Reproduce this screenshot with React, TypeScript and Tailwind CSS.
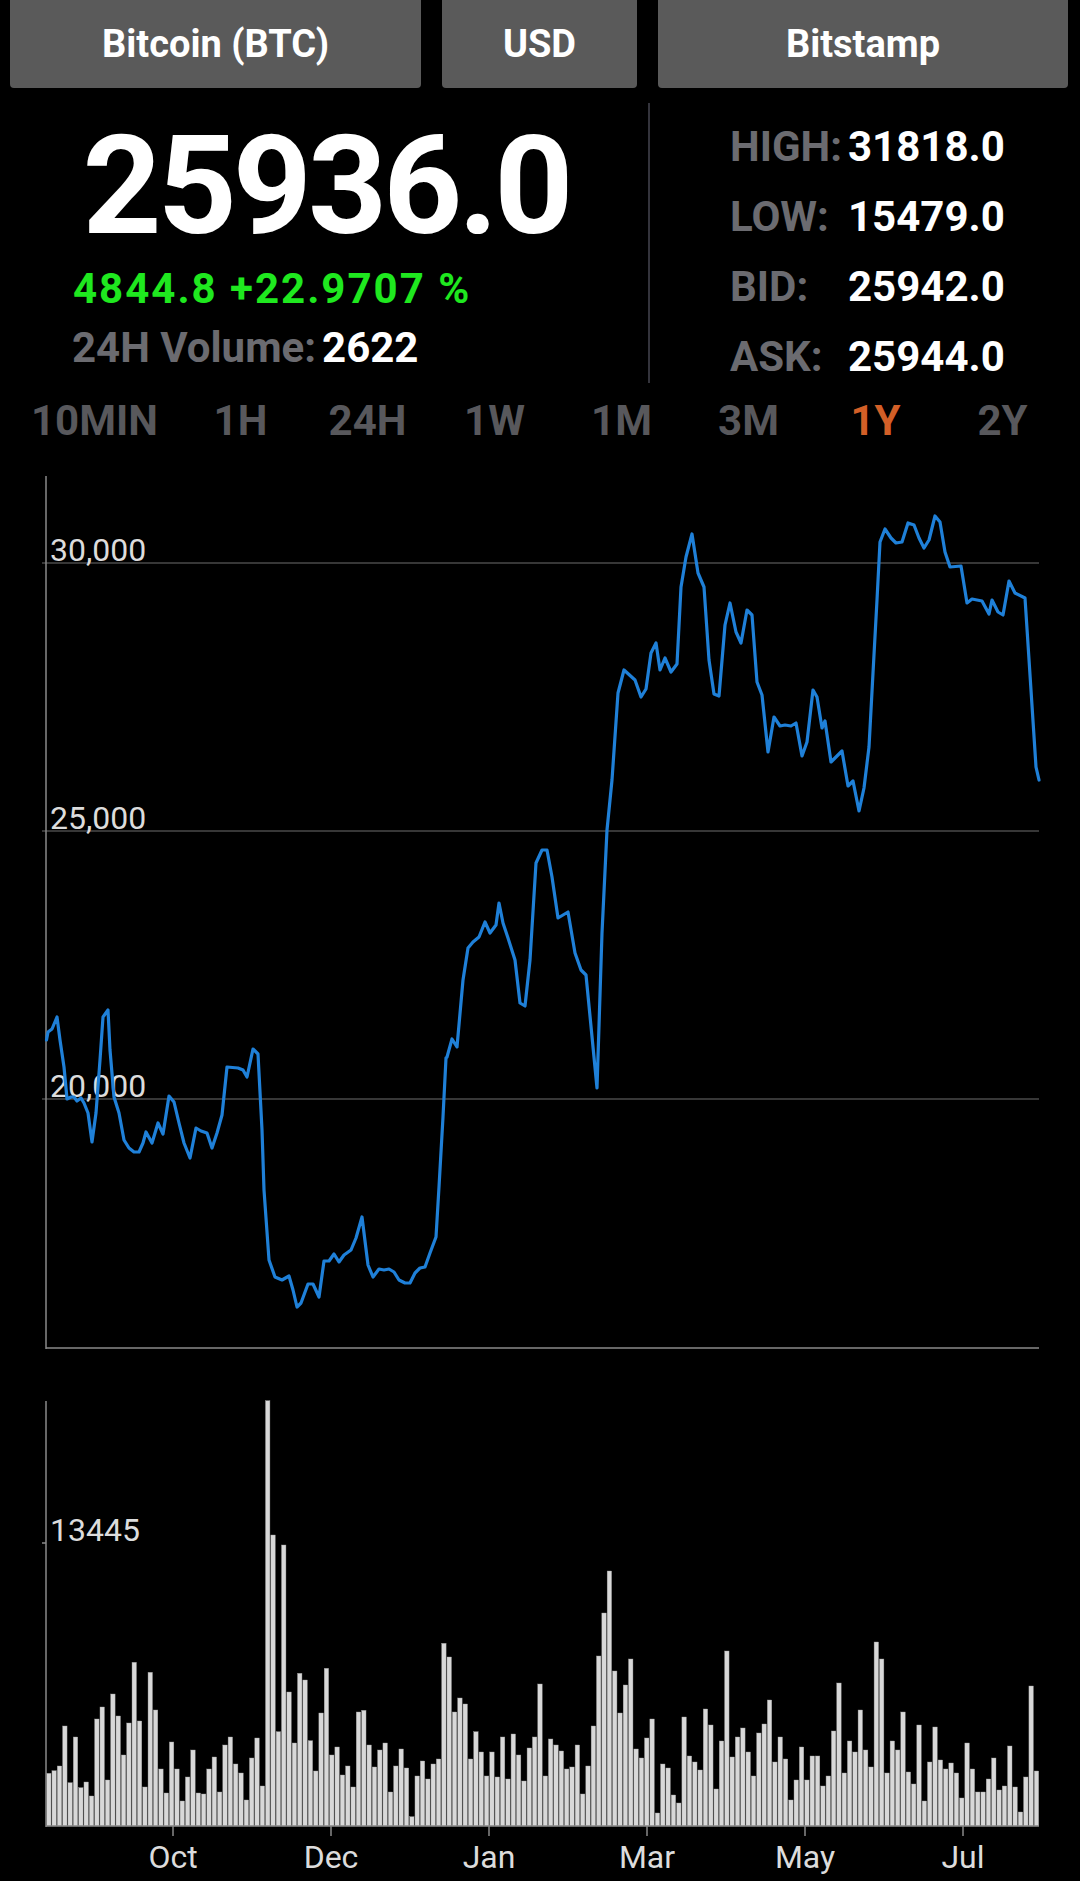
const TIMEFRAMES = ["1H", "24H", "1W", "1M", "3M", "1Y", "2Y"];

const STATS = [
  { label: "HIGH:", value: "31818.0" },
  { label: "LOW:", value: "15479.0" },
  { label: "BID:", value: "25942.0" },
  { label: "ASK:", value: "25944.0" },
];

// price line, in page coordinates
const PRICE = [
  46.5, 1040, 48, 1032, 52, 1029, 57, 1017, 60, 1040, 64, 1067, 67, 1099, 71, 1097, 74, 1097, 77, 1101,
  81, 1098, 84, 1103, 88, 1113, 92, 1142, 96, 1113, 100, 1060, 103, 1017, 108, 1010, 110, 1050, 114, 1097,
  119, 1113, 124, 1140, 129, 1148, 134, 1152, 139, 1152, 143, 1143, 146, 1132, 152, 1143, 158, 1123, 163, 1134,
  169, 1096, 174, 1102, 179, 1123, 184, 1143, 190, 1158, 196, 1128, 201, 1131, 207, 1133, 212, 1148, 217, 1133,
  222, 1115, 227, 1067, 238, 1068, 243, 1070, 247, 1077, 253, 1049, 258, 1054, 262, 1130, 264, 1190, 269, 1260,
  275, 1277, 282, 1280, 289, 1276, 293, 1290, 297, 1307, 301, 1303, 308, 1284, 313, 1284, 319, 1297, 324, 1261,
  329, 1261, 334, 1254, 339, 1262, 344, 1255, 351, 1250, 356, 1238, 362, 1217, 368, 1265, 373, 1277, 379, 1269,
  384, 1270, 389, 1269, 394, 1272, 399, 1280, 405, 1283, 410, 1283, 415, 1273, 420, 1268, 425, 1267, 430, 1253,
  436, 1237, 439, 1187, 443, 1117, 446, 1058, 447, 1057, 452, 1039, 457, 1047, 463, 980, 468, 948, 473, 942,
  479, 937, 485, 922, 490, 933, 496, 925, 499, 903, 503, 923, 508, 938, 515, 960, 520, 1003, 525, 1006,
  530, 960, 536, 863, 542, 850, 547, 850, 552, 877, 558, 918, 568, 912, 575, 953, 581, 970, 586, 975,
  597, 1088, 602, 933, 607, 830, 612, 780, 618, 693, 624, 670, 635, 680, 641, 697, 646, 689, 651, 653,
  656, 643, 660, 670, 665, 658, 671, 672, 677, 664, 681, 587, 686, 557, 692, 534, 698, 573, 704, 587,
  709, 660, 714, 694, 719, 696, 725, 625, 730, 603, 736, 632, 741, 643, 747, 610, 752, 615, 757, 682,
  762, 695, 768, 752, 774, 717, 780, 726, 785, 725, 791, 726, 796, 723, 802, 756, 807, 742, 813, 690,
  817, 697, 822, 728, 825, 721, 831, 762, 836, 757, 842, 751, 848, 786, 853, 781, 859, 811, 864, 788,
  869, 747, 873, 673, 877, 600, 880, 542, 885, 529, 891, 538, 896, 543, 902, 542, 908, 523, 914, 525,
  919, 538, 924, 548, 929, 540, 935, 516, 940, 522, 945, 552, 950, 567, 961, 566, 967, 603, 972, 599,
  982, 601, 989, 614, 992, 600, 998, 612, 1003, 615, 1009, 581, 1015, 593, 1025, 598, 1036, 767, 1039, 780,
];

const VOLUME = [
  52.7, 55.3, 60, 100, 43.3, 89, 38.3, 44, 30, 107, 119, 46, 132, 110, 71, 103, 163.7, 105, 39, 153.7,
  116, 57, 33, 84, 57, 25, 49, 76, 33, 32, 57, 69, 34, 81, 89, 62, 53, 26, 68, 88,
  40, 425.3, 291, 94.3, 281, 134, 83, 152.7, 146, 85.3, 55, 113, 157.7, 71, 79, 51, 60, 39, 114, 115.7,
  81, 59, 76, 83, 34, 60, 77, 58, 9.3, 50, 65, 47, 62, 67, 182.7, 169, 114, 128, 122, 67,
  94.3, 74, 50, 74, 49, 89, 47, 92, 71, 45, 78, 89, 142,
  50, 87, 81, 75, 57, 59, 81, 32, 60, 100, 170, 213, 255, 155, 113, 141, 167, 77, 68, 88,
  107, 13, 62, 58, 31, 23, 109, 70, 64, 56, 117, 101, 37, 85, 175, 69, 89, 98, 74, 50,
  93, 102, 126, 64, 89, 67, 26, 46, 79, 46, 70, 70, 40, 50, 95, 143, 53, 85, 74, 116,
  76, 59, 184, 167, 53, 85, 76, 114, 54, 42, 101, 25, 64, 99, 66, 57, 63, 53, 28, 83,
  57, 34, 34, 47, 68, 36, 40, 80, 39, 14, 49, 140, 55,
];

const MONTHS = [
  { label: "Oct", x: 173 },
  { label: "Dec", x: 331 },
  { label: "Jan", x: 489 },
  { label: "Mar", x: 647 },
  { label: "May", x: 805 },
  { label: "Jul", x: 963 },
];

const LABEL_FONT = "Roboto, sans-serif";

function pricePoints() {
  const out: string[] = [];
  for (let i = 0; i < PRICE.length; i += 2) out.push(`${PRICE[i]},${PRICE[i + 1]}`);
  return out.join(" ");
}

function PriceChart() {
  const grid = [
    { label: "30,000", y: 563, base: 561 },
    { label: "25,000", y: 831, base: 829 },
    { label: "20,000", y: 1099, base: 1097 },
  ];
  return (
    <svg width={1080} height={910} viewBox="0 460 1080 910" className="block">
      {grid.map((g) => (
        <g key={g.label}>
          <line x1={42} x2={1039} y1={g.y} y2={g.y} stroke="#4a4a4a" strokeWidth={1.5} />
          <text x={50} y={g.base} fontSize={32} fill="#dcdcdc" fontFamily={LABEL_FONT}>
            {g.label}
          </text>
        </g>
      ))}
      <line x1={46} x2={46} y1={476} y2={1349} stroke="#8a8a8a" strokeWidth={1.5} />
      <line x1={46} x2={1039} y1={1348} y2={1348} stroke="#8a8a8a" strokeWidth={1.5} />
      <polyline
        points={pricePoints()}
        fill="none"
        stroke="#1f80d8"
        strokeWidth={3.2}
        strokeLinejoin="round"
        strokeLinecap="round"
      />
    </svg>
  );
}

function VolumeChart() {
  const left = 46;
  const right = 1039;
  const base = 1826;
  const w = (right - left) / VOLUME.length;
  return (
    <svg width={1080} height={511} viewBox="0 1370 1080 511" className="block">
      {VOLUME.map((h, i) => (
        <rect
          key={i}
          x={left + i * w + 0.6}
          y={base - h}
          width={w - 0.9}
          height={h}
          fill="#d8d8d8"
          stroke="#9a9a9a"
          strokeWidth={0.4}
        />
      ))}
      <line x1={46} x2={46} y1={1401} y2={1827} stroke="#8a8a8a" strokeWidth={1.5} />
      <line x1={42} x2={46} y1={1543} y2={1543} stroke="#8a8a8a" strokeWidth={1.5} />
      <text x={50} y={1541} fontSize={32} fill="#dcdcdc" fontFamily={LABEL_FONT}>
        13445
      </text>
      <line x1={46} x2={1039} y1={1826} y2={1826} stroke="#8a8a8a" strokeWidth={1.5} />
      {MONTHS.map((m) => (
        <g key={m.label}>
          <line x1={m.x} x2={m.x} y1={1826} y2={1836} stroke="#8a8a8a" strokeWidth={1.5} />
          <text x={m.x} y={1868} fontSize={32} fill="#dcdcdc" textAnchor="middle" fontFamily={LABEL_FONT}>
            {m.label}
          </text>
        </g>
      ))}
    </svg>
  );
}

export default function App() {
  return (
    <div className="min-h-[1881px] w-[1080px] bg-black font-[Roboto,sans-serif] text-white">
      <div className="flex h-[88px] gap-[21px] pl-[10px] pr-[12px]">
        <button className="w-[411px] rounded-b-[4px] bg-[#5a5a5a] text-[38px] font-bold">Bitcoin (BTC)</button>
        <button className="w-[195px] rounded-b-[4px] bg-[#5a5a5a] text-[38px] font-bold">USD</button>
        <button className="flex-1 rounded-b-[4px] bg-[#5a5a5a] text-[38px] font-bold">Bitstamp</button>
      </div>

      <div className="flex h-[300px]">
        <div className="w-[648px] pt-[29px]">
          <div className="pl-[4px] text-center text-[138px] font-bold leading-none tracking-[-4px]">25936.0</div>
          <div className="mt-[13px] pl-[73px] text-[42px] font-bold leading-none tracking-[2px] text-[#1fe81f]">
            4844.8 +22.9707 %
          </div>
          <div className="mt-[17px] pl-[72px] text-[42px] font-bold leading-none">
            <span className="text-[#6b6b70]">24H Volume:</span>
            <span className="ml-[6px]">2622</span>
          </div>
        </div>
        <div className="mt-[15px] h-[280px] w-[2px] bg-[#34343c]" />
        <div className="pl-[80px] pt-[24px] text-[42px] font-bold leading-[70px]">
          {STATS.map((s) => (
            <div key={s.label} className="flex">
              <span className="w-[118px] text-[#6b6b70]">{s.label}</span>
              <span>{s.value}</span>
            </div>
          ))}
        </div>
      </div>

      <div className="flex h-[72px] pt-[12px] text-[42px] font-bold leading-none text-[#58585c]">
        <span className="w-[177px] pl-[31px]">10MIN</span>
        {TIMEFRAMES.map((t) => (
          <span key={t} className={t === "1Y" ? "w-[127px] text-center text-[#d35f27]" : "w-[127px] text-center"}>
            {t}
          </span>
        ))}
      </div>

      <PriceChart />
      <VolumeChart />
    </div>
  );
}
